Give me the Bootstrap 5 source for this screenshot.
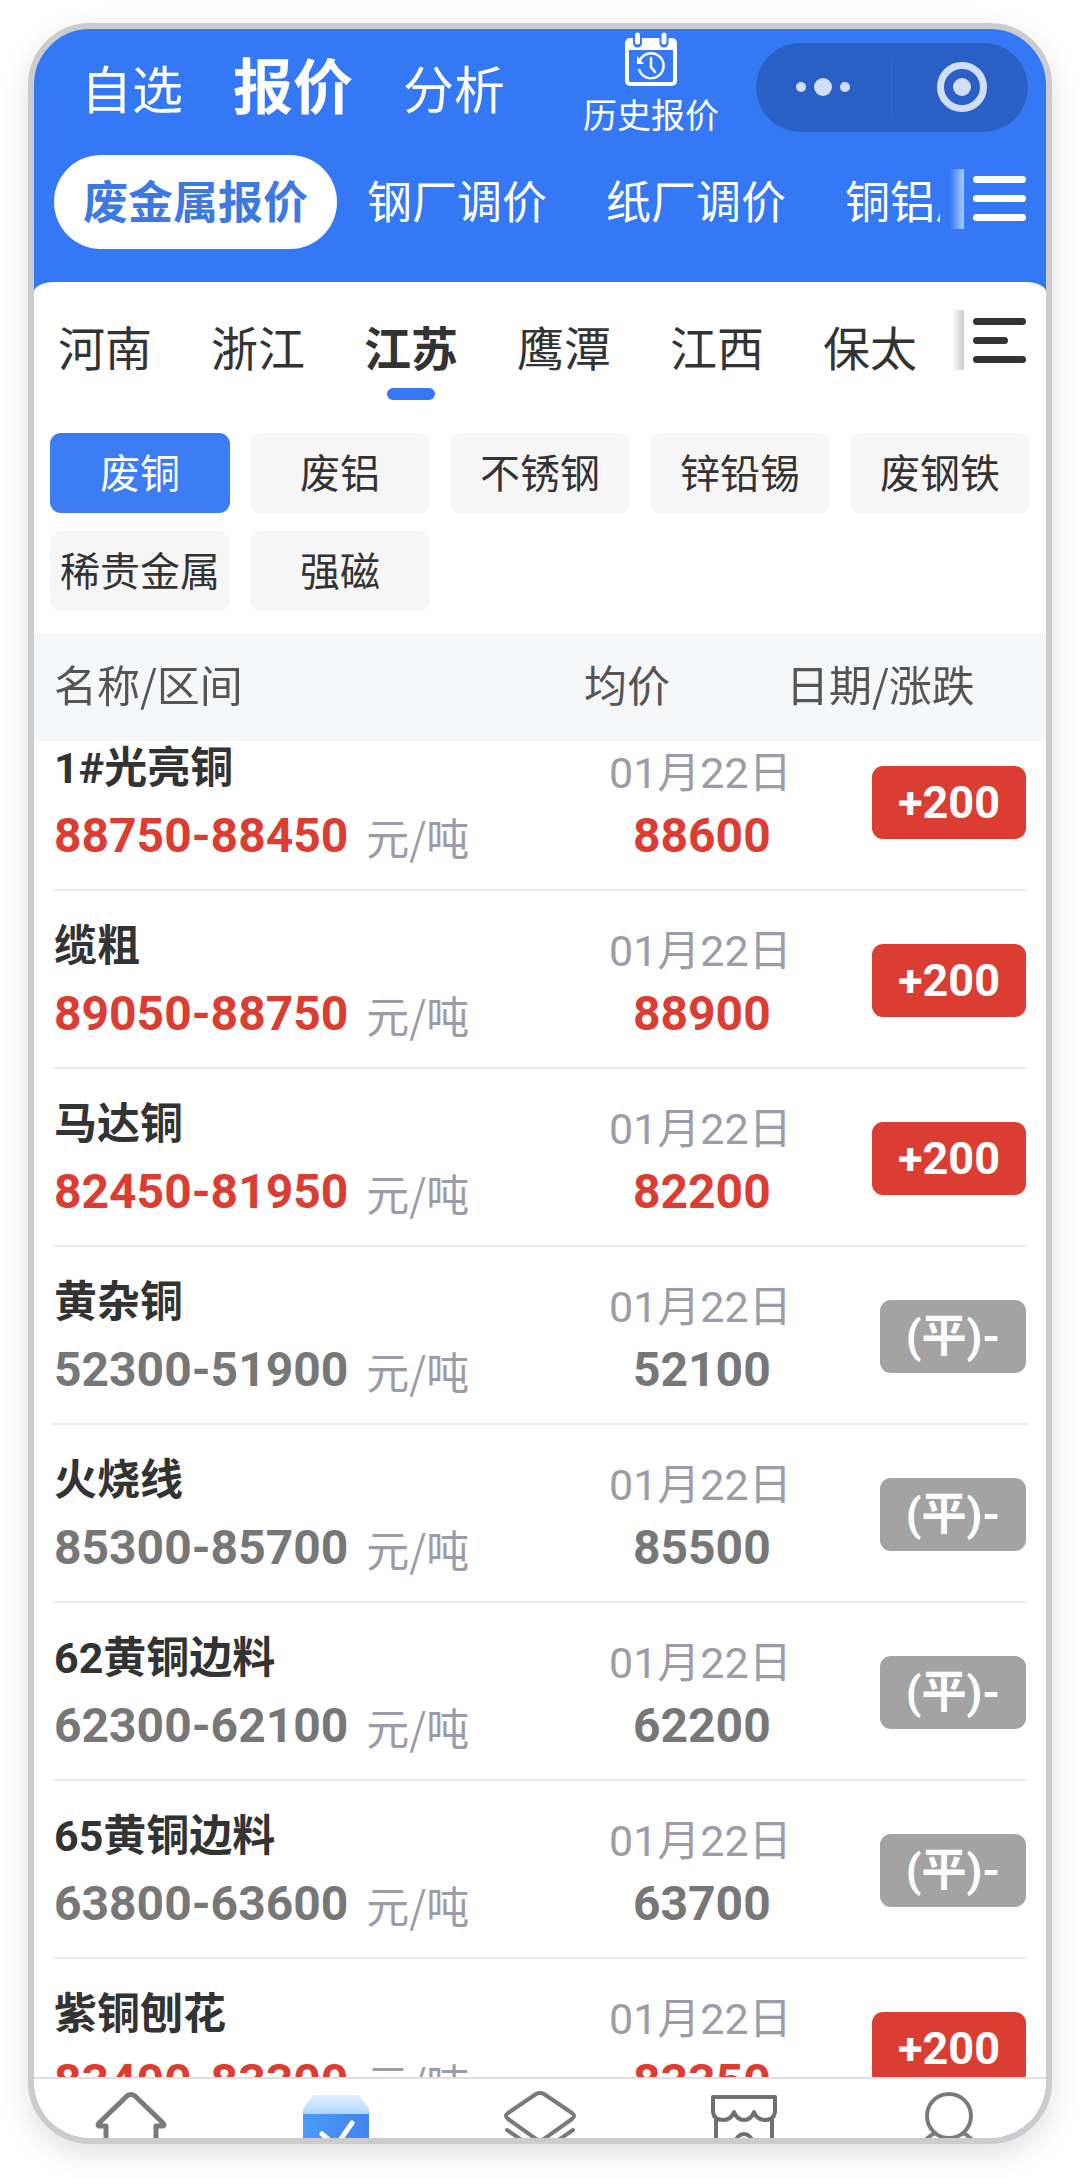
<!DOCTYPE html>
<html lang="zh-CN">
<head>
<meta charset="utf-8">
<meta name="viewport" content="width=device-width, initial-scale=1">
<title>废金属报价</title>
<link href="https://cdn.jsdelivr.net/npm/bootstrap@5.3.0/dist/css/bootstrap.min.css" rel="stylesheet">
<style>
:root{--brand:#3478f5;--ink:#333;--rise:#dc3d33;--flat:#777;--muted-ink:#9c9ca9;--pad:20px}
body{font-family:"Noto Sans CJK SC",sans-serif;color:var(--ink);background:#fff;height:100vh;padding:23px 28px 35px}
a{color:inherit;text-decoration:none}
.phone{height:100%;border:6px solid #ccc;border-radius:62px;box-shadow:0 10px 30px rgba(0,0,0,.12);background:var(--brand)}
.topbar{height:126px;padding:0 18px 0 47px;color:#fff}
.main-tabs{gap:50px;font-size:51px;line-height:60px;padding-top:24px}
.main-tabs .active{font-size:60px;font-weight:700}
.history{font-size:34px;line-height:40px;padding:3px 0 0;margin-right:37px;color:#fff}
.history svg{width:52px;height:54px;margin-bottom:8px}
.capsule{width:272px;height:89px;margin-top:14px;background:#2a60c6;border-radius:45px}
.capsule svg{height:100%}
.scroller{white-space:nowrap;overflow:hidden}
.kind-tabs{padding:0 var(--pad) 33px;color:#fff;font-size:45px;line-height:90px}
.kind-tabs a{padding:0 29px 4px}
.kind-tabs .active{background:#fff;color:#3d78e3;border-radius:47px;font-weight:700}
.kind-tabs .scroller{margin-right:10px;gap:1px}
.more{width:76px;height:60px;flex:none}
.kind-tabs .more{margin-top:14px}
.sheet{background:#fff;border-radius:20px 20px 0 0/10px 10px 0 0;min-height:0}
.region-tabs{padding:28px var(--pad) 0 0;font-size:47px;line-height:72px}
.region-tabs .scroller{padding-left:24px;margin-right:35px;height:91px}
.region-tabs .scroller a{margin-right:59px}
.region-tabs .active{font-weight:700;position:relative}
.region-tabs .active::after{content:"";position:absolute;left:50%;bottom:-18px;width:48px;height:12px;margin-left:-24px;border-radius:6px;background:var(--brand)}
.chips{display:grid;grid-template-columns:repeat(5,1fr);gap:18px 20px;padding:32px 16px 23px}
.chip{height:80px;border:0;border-radius:11px;background:#f6f6f6;color:var(--ink);font-size:40px;line-height:76px;padding:0 0 4px;white-space:nowrap}
.chip.active{background:#3c7df3;color:#fff}
.quotes{overflow:hidden;min-height:0;padding:0 var(--pad)}
.quotes table{width:100%;table-layout:fixed;border-collapse:separate;border-spacing:0}
.quotes th{position:sticky;top:0;z-index:1;padding:0 0 8px;background:#f6f7f9;color:#555;font-size:43px;font-weight:400;line-height:99px}
.quotes th:first-child{box-shadow:-20px 0 #f6f7f9}
.quotes th:last-child{box-shadow:20px 0 #f6f7f9}
.c-avg{width:202px}
.c-chg{width:240px}
.quotes td{padding:21px 0 19px;border-bottom:2px solid #ececee;white-space:nowrap}
.quotes td.avg{padding-left:25px;vertical-align:bottom}
.avg .num{margin-left:24px}
.item{font-size:43px;font-weight:700;line-height:68px}
.item,.day,.num,.tag{font-family:Roboto,"Noto Sans CJK SC",sans-serif}
.num{font-size:48px;font-weight:700;line-height:68px;color:var(--flat)}
.rise .num{color:var(--rise)}
.unit{font:400 43px/68px "Noto Sans CJK SC",sans-serif;color:var(--muted-ink);margin-left:18px}
.line{display:flex;align-items:center}
.day{font-size:43px;line-height:57px;color:var(--muted-ink)}
.tag{display:inline-block;padding:0 26px;font-size:45px;font-weight:700;line-height:73px;border-radius:11px;color:#fff;background:#a3a3a3;vertical-align:middle}
.rise .tag{background:var(--rise)}
.dock{height:61px;flex:none;overflow:hidden;background:#fff;border-top:2px solid #e0e0e0}
.dock a{flex:1;text-align:center}
.dock svg{width:80px;height:80px;display:block;margin:1px auto 0}
.dock nav{margin:0 -5px}
</style>
</head>
<body>
<div class="phone d-flex flex-column overflow-hidden">
  <header class="flex-shrink-0">
    <div class="topbar d-flex align-items-start">
      <nav class="main-tabs d-flex align-items-baseline">
        <a href="#">自选</a><a href="#" class="active">报价</a><a href="#">分析</a>
      </nav>
      <a href="#" class="history ms-auto d-flex flex-column align-items-center">
        <svg viewBox="0 0 52 54" fill="none" aria-hidden="true">
          <rect x="2" y="8" width="48" height="44" rx="3" stroke="#fff" stroke-width="4"/>
          <path d="M2 8h48v10H2z" fill="#fff"/>
          <path d="M12.500 2v9M39 2v9" stroke="#3478f5" stroke-width="9" stroke-linecap="round"/>
          <path d="M12.500 3v7M39 3v7" stroke="#fff" stroke-width="5" stroke-linecap="round"/>
          <path d="M15 28a12.500 12.500 0 1 1-1 9" stroke="#fff" stroke-width="2.500"/>
          <path d="M12 24v8h7z" fill="#fff"/>
          <path d="M26 26v9l4 5" stroke="#fff" stroke-width="2.500" stroke-linecap="round"/>
        </svg>
        历史报价
      </a>
      <div class="capsule">
        <svg viewBox="0 0 272 89" fill="#d1def6" role="img" aria-label="菜单与关闭">
          <circle cx="45" cy="44" r="5"/><circle cx="67" cy="44" r="9"/><circle cx="89" cy="44" r="5"/>
          <path d="M135 17h1v56h-1z" fill="#3268d0"/>
          <circle cx="206" cy="44" r="21.500" fill="none" stroke="#d1def6" stroke-width="7"/><circle cx="206" cy="44" r="9"/>
        </svg>
      </div>
    </div>
    <div class="kind-tabs d-flex align-items-start">
      <nav class="scroller d-flex flex-fill">
        <a href="#" class="active">废金属报价</a><a href="#">钢厂调价</a><a href="#">纸厂调价</a><a href="#">铜铝厂调价</a>
      </nav>
      <svg class="more" viewBox="0 0 76 60" role="img" aria-label="全部栏目">
        <defs><linearGradient id="fadeW"><stop stop-color="#fff" stop-opacity="0"/><stop offset="1" stop-color="#fff" stop-opacity=".6"/></linearGradient></defs>
        <path d="M0 0h14v60H0z" fill="url(#fadeW)"/>
        <path d="M26.500 10.500h46M26.500 29.500h46M26.500 48.500h46" stroke="#fff" stroke-width="7" stroke-linecap="round"/>
      </svg>
    </div>
  </header>

  <main class="sheet d-flex flex-column flex-fill">
    <div class="region-tabs d-flex align-items-start flex-shrink-0">
      <nav class="scroller d-flex flex-fill align-items-start">
        <a href="#">河南</a><a href="#">浙江</a><a href="#" class="active">江苏</a><a href="#">鹰潭</a><a href="#">江西</a><a href="#">保太</a>
      </nav>
      <svg class="more" viewBox="0 0 76 60" role="img" aria-label="全部地区">
        <defs><linearGradient id="fadeK"><stop stop-color="#000" stop-opacity="0"/><stop offset="1" stop-color="#000" stop-opacity=".2"/></linearGradient></defs>
        <path d="M2 0h12v60H2z" fill="url(#fadeK)"/>
        <path d="M26.500 11.500h46M26.500 30.500h28M26.500 49.500h46" stroke="#333" stroke-width="7" stroke-linecap="round"/>
      </svg>
    </div>
    <div class="chips flex-shrink-0">
      <button type="button" class="chip active">废铜</button>
      <button type="button" class="chip">废铝</button>
      <button type="button" class="chip">不锈钢</button>
      <button type="button" class="chip">锌铅锡</button>
      <button type="button" class="chip">废钢铁</button>
      <button type="button" class="chip">稀贵金属</button>
      <button type="button" class="chip">强磁</button>
    </div>
    <div class="quotes flex-fill" id="quotes">
      <table>
        <thead><tr><th>名称/区间</th><th class="c-avg">均价</th><th class="c-chg">日期/涨跌</th></tr></thead>
        <tbody>
          <tr class="rise"><td><div class="item">1#光亮铜</div><div class="line"><span class="num">88750-88450</span><span class="unit">元/吨</span></div></td><td class="avg"><div class="day">01月22日</div><div class="num">88600</div></td><td class="text-end"><span class="tag">+200</span></td></tr>
          <tr class="rise"><td><div class="item">缆粗</div><div class="line"><span class="num">89050-88750</span><span class="unit">元/吨</span></div></td><td class="avg"><div class="day">01月22日</div><div class="num">88900</div></td><td class="text-end"><span class="tag">+200</span></td></tr>
          <tr class="rise"><td><div class="item">马达铜</div><div class="line"><span class="num">82450-81950</span><span class="unit">元/吨</span></div></td><td class="avg"><div class="day">01月22日</div><div class="num">82200</div></td><td class="text-end"><span class="tag">+200</span></td></tr>
          <tr><td><div class="item">黄杂铜</div><div class="line"><span class="num">52300-51900</span><span class="unit">元/吨</span></div></td><td class="avg"><div class="day">01月22日</div><div class="num">52100</div></td><td class="text-end"><span class="tag">(平)-</span></td></tr>
          <tr><td><div class="item">火烧线</div><div class="line"><span class="num">85300-85700</span><span class="unit">元/吨</span></div></td><td class="avg"><div class="day">01月22日</div><div class="num">85500</div></td><td class="text-end"><span class="tag">(平)-</span></td></tr>
          <tr><td><div class="item">62黄铜边料</div><div class="line"><span class="num">62300-62100</span><span class="unit">元/吨</span></div></td><td class="avg"><div class="day">01月22日</div><div class="num">62200</div></td><td class="text-end"><span class="tag">(平)-</span></td></tr>
          <tr><td><div class="item">65黄铜边料</div><div class="line"><span class="num">63800-63600</span><span class="unit">元/吨</span></div></td><td class="avg"><div class="day">01月22日</div><div class="num">63700</div></td><td class="text-end"><span class="tag">(平)-</span></td></tr>
          <tr class="rise"><td><div class="item">紫铜刨花</div><div class="line"><span class="num">83400-83300</span><span class="unit">元/吨</span></div></td><td class="avg"><div class="day">01月22日</div><div class="num">83350</div></td><td class="text-end"><span class="tag">+200</span></td></tr>
        </tbody>
      </table>
    </div>
    <div class="dock">
      <nav class="d-flex" aria-label="主导航">
        <a href="#" aria-label="首页"><svg viewBox="0 0 80 80" fill="none" stroke="#7a7a7a" stroke-width="5" stroke-linejoin="round" stroke-linecap="round"><path d="M15 70V46H8q-2-1 0-3L36 16q4-3 8 0l28 27q2 2 0 3h-7v24"/></svg></a>
        <a href="#" aria-label="报价"><svg viewBox="0 0 80 80" fill="none">
          <defs><linearGradient id="lid" x2="0" y2="1"><stop stop-color="#e4f1ff"/><stop offset="1" stop-color="#a9d5fd"/></linearGradient><linearGradient id="box"><stop stop-color="#4a9bf7"/><stop offset="1" stop-color="#4483f0"/></linearGradient></defs>
          <path d="M17 15h46l10 14v6H7v-6z" fill="url(#lid)"/><path d="M7 34h66v40H7z" fill="url(#box)"/><path d="M26 54l14 12 16-23" stroke="#fff" stroke-width="5" stroke-linecap="round" stroke-linejoin="round"/></svg></a>
        <a href="#" aria-label="资讯"><svg viewBox="0 0 80 80" fill="none" stroke="#7a7a7a" stroke-width="4" stroke-linejoin="round" stroke-linecap="round"><path d="M36 14q4-2 8 0l28 19q4 3 0 6L44 59q-4 2-8 0L8 39q-4-3 0-6zM7 50l29 20q4 2 8 0l29-20"/></svg></a>
        <a href="#" aria-label="商城"><svg viewBox="0 0 80 80" fill="none" stroke="#707070" stroke-width="4" stroke-linejoin="round" stroke-linecap="round"><path d="M9 17h62v15q-1 8-10 8-8 0-11-8-3 8-10 8t-10-8q-3 8-11 8-9 0-10-8zM12 40v34M68 40v34"/><circle cx="40" cy="62" r="8"/></svg></a>
        <a href="#" aria-label="我的"><svg viewBox="0 0 80 80" fill="none" stroke="#7a7a7a" stroke-width="4" stroke-linecap="round"><circle cx="40" cy="36" r="22"/><path d="M26 53Q12 60 8 76M54 53q14 7 18 23"/></svg></a>
      </nav>
    </div>
  </main>
</div>
<script src="https://cdn.jsdelivr.net/npm/bootstrap@5.3.0/dist/js/bootstrap.bundle.min.js"></script>
<script>document.getElementById('quotes').scrollTop = 28;</script>
</body>
</html>
